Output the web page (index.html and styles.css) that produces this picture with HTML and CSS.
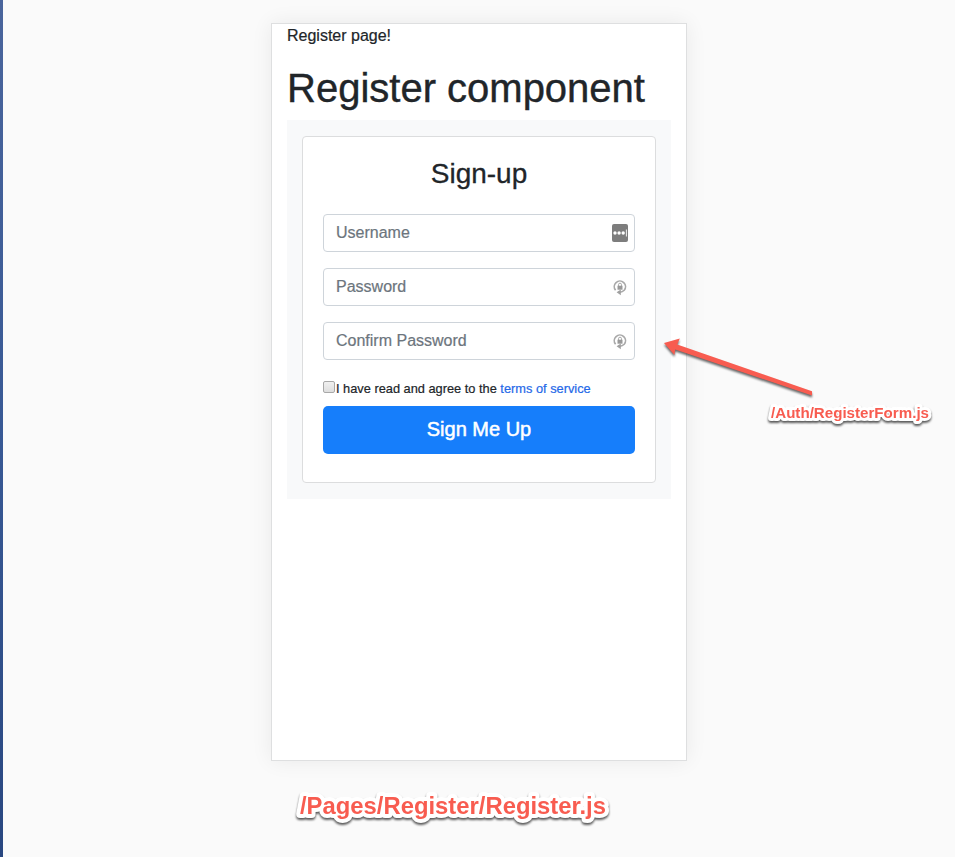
FILE: index.html
```html
<!DOCTYPE html>
<html lang="en">
<head>
<meta charset="utf-8">
<title>Register</title>
<link rel="stylesheet" href="styles.css">
</head>
<body>
<main class="panel">
  <div class="page-label">Register page!</div>
  <h1 class="heading">Register component</h1>
  <section class="well">
    <form class="card">
      <h2 class="title">Sign-up</h2>
      <div class="field"><span class="placeholder">Username</span>
        <svg class="icon" width="18" height="18" viewBox="0 0 18 18"><rect x="1" y="0" width="16" height="18" rx="2" fill="#7d7d7d"/><circle cx="4" cy="9" r="1.7" fill="#fff"/><circle cx="8.1" cy="9" r="1.7" fill="#fff"/><circle cx="12.2" cy="9" r="1.7" fill="#fff"/><path d="M15.4 5.5v7" stroke="#fff" stroke-width=".9"/></svg>
      </div>
      <div class="field"><span class="placeholder">Password</span>
        <svg class="icon" width="18" height="18" viewBox="0 0 18 18"><path d="M4.6 12.2A5.6 5.6 0 1 1 13.2 12.2Q11.6 14 8.5 14.3" fill="none" stroke="#a9a9a9" stroke-width="1.7"/><path d="M5.6 14.3l4.2-2.9v5.8z" fill="#a0a0a0"/><rect x="6.5" y="7.7" width="5" height="4" fill="#999"/><path d="M7.5 8V6.7a1.5 1.5 0 0 1 3 0V8" fill="none" stroke="#aaa"/></svg>
      </div>
      <div class="field"><span class="placeholder">Confirm Password</span>
        <svg class="icon" width="18" height="18" viewBox="0 0 18 18"><path d="M4.6 12.2A5.6 5.6 0 1 1 13.2 12.2Q11.6 14 8.5 14.3" fill="none" stroke="#a9a9a9" stroke-width="1.7"/><path d="M5.6 14.3l4.2-2.9v5.8z" fill="#a0a0a0"/><rect x="6.5" y="7.7" width="5" height="4" fill="#999"/><path d="M7.5 8V6.7a1.5 1.5 0 0 1 3 0V8" fill="none" stroke="#aaa"/></svg>
      </div>
      <div class="terms"><span class="checkbox"></span><span>I have read and agree to the <a class="link">terms of service</a></span></div>
      <button class="submit" type="button">Sign Me Up</button>
    </form>
  </section>
</main>
<svg class="arrow" width="170" height="80" viewBox="650 330 170 80"><path d="M664 343l15.8-4.5-2.6 6L812 391.3v4.2L675.2 349.4l-.8 5.6z" fill="#f85c50"/></svg>
<svg class="note note-form" width="185" height="40"><text x="11" y="23" textLength="158" lengthAdjust="spacingAndGlyphs">/Auth/RegisterForm.js</text></svg>
<svg class="note note-page" width="340" height="55"><text x="15" y="34" textLength="306" lengthAdjust="spacingAndGlyphs">/Pages/Register/Register.js</text></svg>
</body>
</html>
```
FILE: styles.css
```css
* { box-sizing: border-box; }
body {
  margin: 0;
  height: 857px;
  padding: 23px 0 0 268px;
  border-left: 3px solid #3e5b96;
  border-image: linear-gradient(#4a659c, #385995 50%, #294780) 1;
  background: #fafafa;
  color: #212529;
  font: 16px/24px "Liberation Sans", Arial, sans-serif;
  -webkit-text-stroke: .2px currentColor;
  overflow: hidden;
  white-space: nowrap;
}
.panel {
  width: 416px;
  height: 738px;
  padding: 0 15px;
  border: 1px solid #dedfe0;
  background: #fff;
  box-shadow: 0 0 20px rgba(0, 0, 0, .07);
}
.heading { margin: 16px 0 8px; font-size: 40px; font-weight: 400; line-height: 48px; -webkit-text-stroke-width: .4px; }
.well { padding: 16px 15px; background: #f8f9fa; }
.card {
  height: 347px;
  padding: 20px;
  border: 1px solid #dcddde;
  border-radius: 4px;
  background: #fff;
}
.title { margin: 0 0 23px; font-size: 28px; font-weight: 400; line-height: 34px; text-align: center; -webkit-text-stroke-width: .3px; }
.field {
  display: flex;
  align-items: center;
  justify-content: space-between;
  height: 38px;
  margin-bottom: 16px;
  padding: 0 5px 0 12px;
  border: 1px solid #ced4da;
  border-radius: 4px;
  color: #6c757d;
}
.terms { display: flex; align-items: center; height: 24px; margin: 17px 0 5px; font-size: 12.8px; }
.checkbox {
  width: 12px;
  height: 12px;
  margin: -5px 1px 0 0;
  border: 1px solid #a8a8a8;
  border-radius: 2px;
  background: linear-gradient(#f0f0f0, #dedede);
}
.link { color: #2468e8; -webkit-text-stroke-color: #2468e8; }
.submit {
  display: block;
  width: 100%;
  height: 48px;
  padding: 0 0 2px;
  border: 0;
  border-radius: 5px;
  background: #167efb;
  color: #fff;
  font: 20px/30px "Liberation Sans", Arial, sans-serif;
  -webkit-text-stroke: .5px #fff;
}
.arrow { position: absolute; left: 650px; top: 330px; filter: drop-shadow(0 2px 1px rgba(0, 0, 0, .6)); }
.note {
  position: absolute;
  fill: #f85c50;
  font-weight: 700;
  stroke: #fff;
  stroke-width: 6px;
  stroke-linejoin: round;
  paint-order: stroke fill;
  -webkit-text-stroke: 0;
  filter: drop-shadow(0 2px 1px rgba(0, 0, 0, .65));
}
.note-form { left: 760px; top: 395px; font-size: 15px; }
.note-page { left: 285px; top: 780px; font-size: 24px; stroke-width: 8px; }
```
